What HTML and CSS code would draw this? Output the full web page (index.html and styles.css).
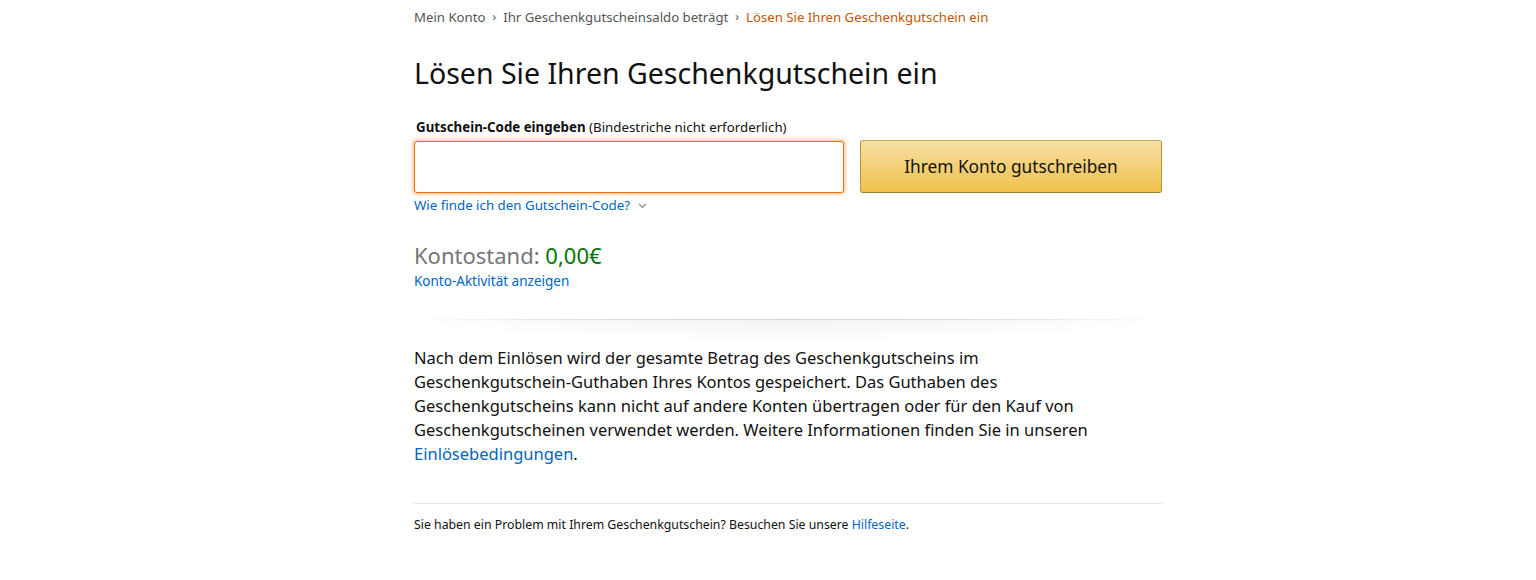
FILE: index.html
```html
<!DOCTYPE html>
<html lang="de">
<head>
<meta charset="utf-8">
<title>Geschenkgutschein einlösen</title>
<link rel="stylesheet" href="styles.css">
</head>
<body>
<div class="page">
  <nav class="crumbs">
    <a class="crumb" href="#">Mein Konto</a>
    <span class="sep">›</span>
    <a class="crumb" href="#">Ihr Geschenkgutscheinsaldo beträgt</a>
    <span class="sep">›</span>
    <span class="crumb current">Lösen Sie Ihren Geschenkgutschein ein</span>
  </nav>

  <h1 class="title">Lösen Sie Ihren Geschenkgutschein ein</h1>

  <label class="label" for="code"><b>Gutschein-Code eingeben</b> (Bindestriche nicht erforderlich)</label>
  <div class="form-row">
    <div class="field">
      <input id="code" class="code-input" type="text">
      <a class="help-link" href="#">Wie finde ich den Gutschein-Code?
        <svg class="chev" width="9" height="6" viewBox="0 0 9 6"><path d="M1 1l3.5 3.5L8 1" fill="none" stroke="#888" stroke-width="1.1"/></svg>
      </a>
    </div>
    <button class="redeem" type="button">Ihrem Konto gutschreiben</button>
  </div>

  <div class="balance">
    <span class="bal-label">Kontostand:</span> <span class="bal-value">0,00€</span>
  </div>
  <a class="activity" href="#">Konto-Aktivität anzeigen</a>

  <div class="divider"></div>

  <p class="info">Nach dem Einlösen wird der gesamte Betrag des Geschenkgutscheins im <span class="nowrap">Geschenkgutschein-Guthaben</span> Ihres Kontos gespeichert. Das Guthaben des Geschenkgutscheins kann nicht auf andere Konten übertragen oder für den Kauf von Geschenkgutscheinen verwendet werden. Weitere Informationen finden Sie in unseren <a href="#">Einlösebedingungen</a>.</p>

  <hr class="rule">

  <p class="footer">Sie haben ein Problem mit Ihrem Geschenkgutschein? Besuchen Sie unsere <a href="#">Hilfeseite</a>.</p>
</div>
</body>
</html>
```

FILE: styles.css
```css
* { box-sizing: border-box; }
body {
  margin: 0;
  background: #fff;
  color: #111;
  font-family: "Noto Sans", "Open Sans", Arial, sans-serif;
}
a { color: #0066c0; text-decoration: none; }
.nowrap { white-space: nowrap; }

.page {
  width: 748px;
  margin-left: 414px;
}

.crumbs {
  display: flex;
  align-items: center;
  gap: 7px;
  padding-top: 7px;
  height: 26px;
  font-size: 13.2px;
  line-height: 18px;
}
.crumb { color: #555; }
.sep { color: #555; font-size: 12px; }
.current { color: #c45500; }

.title {
  margin: 29px 0 0;
  font-size: 28.5px;
  font-weight: 400;
  line-height: 36px;
  color: #111;
}

.label {
  display: block;
  margin-top: 27px;
  padding-left: 2px;
  font-size: 13.3px;
  line-height: 19px;
}
.label b { font-weight: 700; }

.form-row {
  display: flex;
  gap: 16px;
  margin-top: 4px;
}
.field { width: 430px; }
.code-input {
  display: block;
  width: 430px;
  height: 52px;
  border: 1px solid #e77600;
  border-radius: 3px;
  box-shadow: 0 0 3px 2px rgba(228, 121, 17, 0.35);
  outline: none;
}
.help-link {
  display: inline-flex;
  align-items: center;
  gap: 8px;
  margin-top: 0;
  font-size: 13.3px;
  line-height: 18px;
}
.chev { margin-top: 1px; }

.redeem {
  width: 303px;
  height: 53px;
  margin-top: -1px;
  border: 1px solid #a88734;
  border-color: #c5a352 #b8943b #9c7e31;
  border-radius: 3px;
  background: linear-gradient(to bottom, #f7dfa5, #f0c14b);
  color: #111;
  font-family: inherit;
  font-size: 17.3px;
}

.balance {
  margin-top: 27px;
  font-size: 22px;
  line-height: 26px;
}
.bal-label { color: #767676; }
.bal-value { color: #007600; }

.activity {
  display: block;
  margin-top: 4px;
  font-size: 13.5px;
  line-height: 18px;
}

.divider {
  height: 22px;
  margin-top: 29px;
  background:
    linear-gradient(to right, rgba(0,0,0,0) 0%, rgba(0,0,0,0.1) 20%, rgba(0,0,0,0.12) 50%, rgba(0,0,0,0.1) 80%, rgba(0,0,0,0) 100%) top / 100% 1px no-repeat,
    radial-gradient(ellipse 50% 22px at 50% 0, rgba(0,0,0,0.05), rgba(0,0,0,0) 100%);
}

.info {
  max-width: 732px;
  margin: 5px 0 0;
  font-size: 16.5px;
  line-height: 24px;
  color: #111;
}

.rule {
  margin: 37px 0 0;
  border: 0;
  border-top: 1px solid #e7e7e7;
}

.footer {
  margin: 12px 0 0;
  font-size: 12.3px;
  line-height: 18px;
  color: #111;
}
```
